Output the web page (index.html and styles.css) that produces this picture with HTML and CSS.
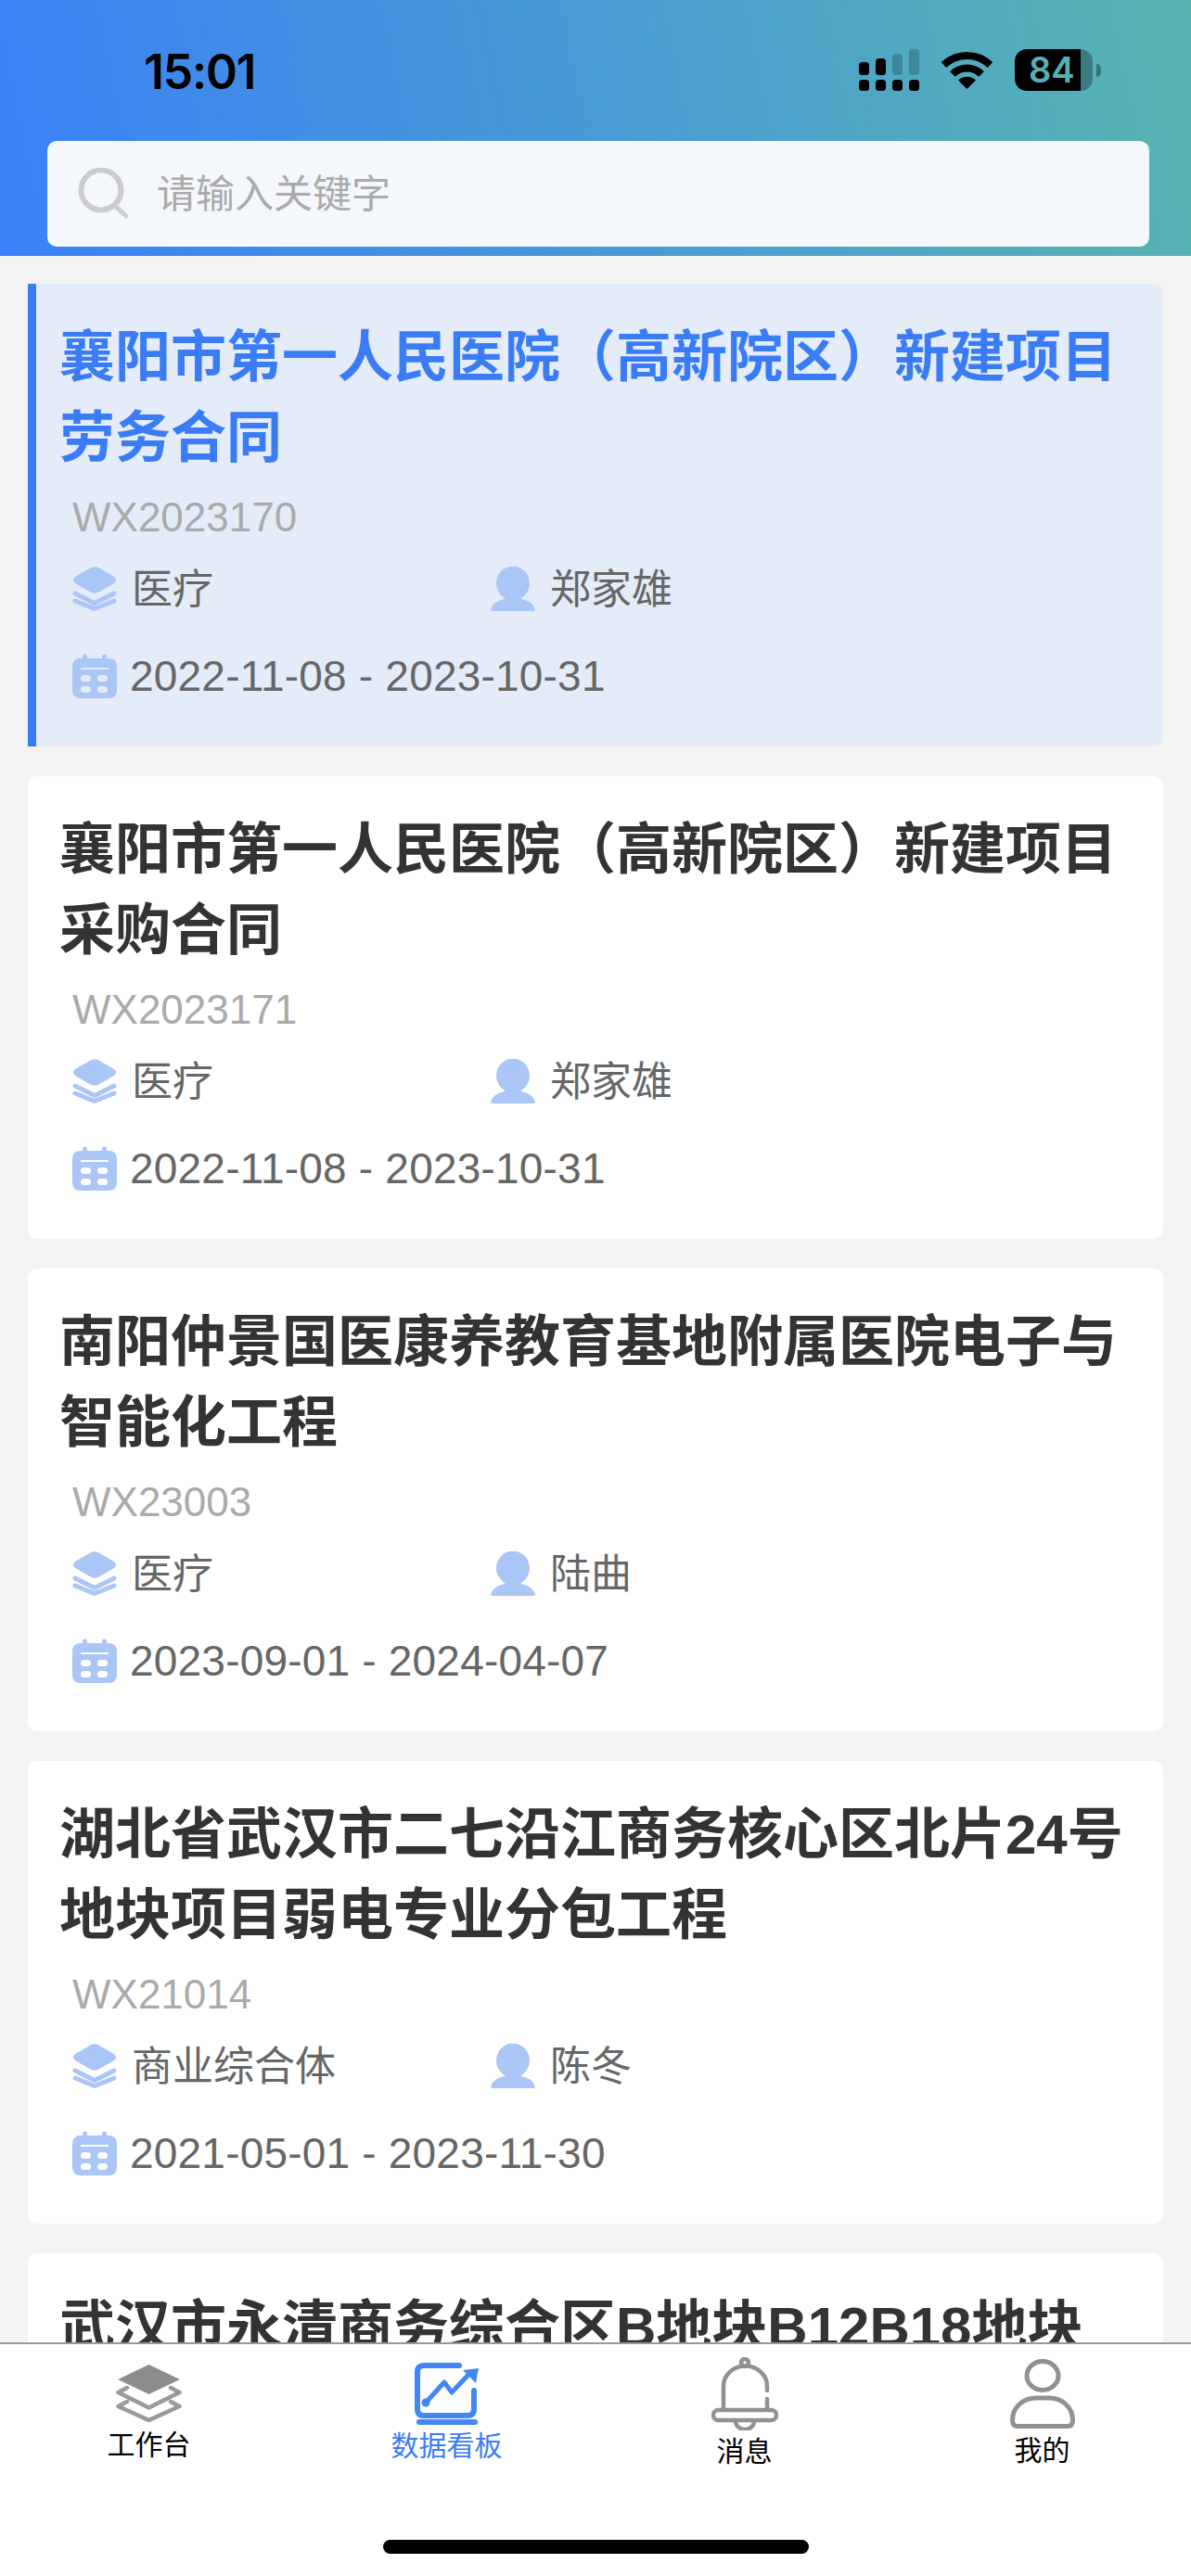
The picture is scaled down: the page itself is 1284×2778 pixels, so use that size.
FILE: index.html
```html
<!DOCTYPE html>
<html lang="zh-CN">
<head>
<meta charset="utf-8">
<title>数据看板</title>
<link rel="stylesheet" href="styles.css">
</head>
<body>
<svg class="defs" width="0" height="0" aria-hidden="true">
  <symbol id="i-layers" viewBox="0 0 48 48">
    <path class="ic-fill" d="M19.5 1.5 Q24 -1 28.500 1.500 L45 11 Q49 14.500 45 18 L28.500 27.500 Q24 30 19.500 27.500 L3 18 Q-1 14.500 3 11 Z"/>
    <path class="ic-line" d="M3 29 L24 39.500 L45 29 M3 37 L24 45.500 L45 37"/>
  </symbol>
  <symbol id="i-user" viewBox="0 0 48 48">
    <ellipse class="ic-fill" cx="24" cy="18" rx="18" ry="18.500"/>
    <path class="ic-fill" d="M16 30 H32 L33 35 Q46 38 48 46 Q48 48 46 48 H2 Q0 48 0 46 Q2 38 15 35 Z"/>
  </symbol>
  <symbol id="i-cal" viewBox="0 0 48 48">
    <path class="ic-fill" d="M11 5 V3 A2.500 2.500 0 0 1 16 3 V5 H32 V3 A2.500 2.500 0 0 1 37 3 V5 H39 Q48 5 48 14 V39 Q48 48 39 48 H9 Q0 48 0 39 V14 Q0 5 9 5 Z"/>
    <rect class="ic-hole" x="9" y="15" width="30" height="2"/>
    <rect class="ic-hole" x="9" y="23" width="11" height="7" rx="3.500"/>
    <rect class="ic-hole" x="27" y="23" width="11" height="7" rx="3.500"/>
    <rect class="ic-hole" x="9" y="35" width="11" height="7" rx="3.500"/>
    <rect class="ic-hole" x="27" y="35" width="11" height="7" rx="3.500"/>
  </symbol>
</svg>

<header class="header">
  <div class="status">
    <span class="time">15:01</span>
    <div class="status-icons">
      <svg class="sig" viewBox="0 0 65 45">
        <rect class="sig-on" x="0" y="14" width="11" height="14" rx="3.500"/>
        <rect class="sig-on" x="18" y="10" width="11" height="18" rx="3.500"/>
        <rect class="sig-off" x="36" y="5" width="11" height="23" rx="3.500"/>
        <rect class="sig-off" x="54" y="0" width="11" height="28" rx="3.500"/>
        <rect class="sig-on" x="0" y="33" width="11" height="12" rx="3.500"/>
        <rect class="sig-on" x="18" y="33" width="11" height="12" rx="3.500"/>
        <rect class="sig-on" x="36" y="33" width="11" height="12" rx="3.500"/>
        <rect class="sig-on" x="54" y="33" width="11" height="12" rx="3.500"/>
      </svg>
      <svg class="wifi" viewBox="0 0 57 42">
        <path class="wifi-arc" d="M3.500 16 A36 36 0 0 1 53.500 16"/>
        <path class="wifi-arc" d="M13 26 A22 22 0 0 1 44 26"/>
        <path d="M28.500 42 L19 32.500 A14 14 0 0 1 38 32.500 Z"/>
      </svg>
      <div class="battery">
        <span class="battery-body">84</span>
        <span class="battery-nub"></span>
      </div>
    </div>
  </div>
  <div class="search">
    <svg class="search-icon" viewBox="0 0 56 56">
      <ellipse class="search-ring" cx="25" cy="24" rx="21.500" ry="21.500"/>
      <path class="search-tail" d="M41 42 L52 52"/>
    </svg>
    <span class="search-text">请输入关键字</span>
  </div>
</header>

<main class="list">
  <article class="card card-active">
    <h2 class="card-title">襄阳市第一人民医院（高新院区）新建项目劳务合同</h2>
    <div class="card-code">WX2023170</div>
    <div class="card-row">
      <div class="meta meta-type"><svg class="meta-icon"><use href="#i-layers"/></svg><span>医疗</span></div>
      <div class="meta"><svg class="meta-icon"><use href="#i-user"/></svg><span>郑家雄</span></div>
    </div>
    <div class="card-date"><svg class="meta-icon"><use href="#i-cal"/></svg><span>2022-11-08 - 2023-10-31</span></div>
  </article>
  <article class="card">
    <h2 class="card-title">襄阳市第一人民医院（高新院区）新建项目采购合同</h2>
    <div class="card-code">WX2023171</div>
    <div class="card-row">
      <div class="meta meta-type"><svg class="meta-icon"><use href="#i-layers"/></svg><span>医疗</span></div>
      <div class="meta"><svg class="meta-icon"><use href="#i-user"/></svg><span>郑家雄</span></div>
    </div>
    <div class="card-date"><svg class="meta-icon"><use href="#i-cal"/></svg><span>2022-11-08 - 2023-10-31</span></div>
  </article>
  <article class="card">
    <h2 class="card-title">南阳仲景国医康养教育基地附属医院电子与智能化工程</h2>
    <div class="card-code">WX23003</div>
    <div class="card-row">
      <div class="meta meta-type"><svg class="meta-icon"><use href="#i-layers"/></svg><span>医疗</span></div>
      <div class="meta"><svg class="meta-icon"><use href="#i-user"/></svg><span>陆曲</span></div>
    </div>
    <div class="card-date"><svg class="meta-icon"><use href="#i-cal"/></svg><span>2023-09-01 - 2024-04-07</span></div>
  </article>
  <article class="card">
    <h2 class="card-title">湖北省武汉市二七沿江商务核心区北片24号地块项目弱电专业分包工程</h2>
    <div class="card-code">WX21014</div>
    <div class="card-row">
      <div class="meta meta-type"><svg class="meta-icon"><use href="#i-layers"/></svg><span>商业综合体</span></div>
      <div class="meta"><svg class="meta-icon"><use href="#i-user"/></svg><span>陈冬</span></div>
    </div>
    <div class="card-date"><svg class="meta-icon"><use href="#i-cal"/></svg><span>2021-05-01 - 2023-11-30</span></div>
  </article>
  <article class="card">
    <h2 class="card-title">武汉市永清商务综合区B地块B12B18地块</h2>
  </article>
</main>

<nav class="tabbar">
  <div class="tabs">
    <div class="tab tab-work">
      <svg class="tab-svg" width="71" height="62" viewBox="0 0 71 62">
        <path class="t-solid" d="M35.500 0 L69 16 L35.500 32 L2 16 Z"/>
        <path class="t-chev" d="M12 25 L2.500 30 L35.500 46.500 L68.500 30 L59 25 M12 40 L2.500 45 L35.500 60 L68.500 45 L59 40"/>
      </svg>
      <span class="tab-label">工作台</span>
    </div>
    <div class="tab tab-data tab-on">
      <svg class="tab-svg" width="70" height="67" viewBox="0 0 70 67">
        <path class="d-line" d="M48 3 H10 Q3 3 3 10 V50 Q3 57 10 57 H57 Q64 57 64 50 V30"/>
        <path class="d-line" d="M5 64 H65"/>
        <path class="d-thin" d="M12 43 L32 21 L40 32 L58 13"/>
        <circle class="d-solid" cx="12" cy="43" r="4.500"/>
        <path class="d-solid" d="M69 6 L52 8 L66 22 Z"/>
      </svg>
      <span class="tab-label">数据看板</span>
    </div>
    <div class="tab tab-msg">
      <svg class="tab-svg" width="72" height="79" viewBox="0 0 72 79">
        <circle class="t-line" cx="36" cy="6" r="4"/>
        <path class="t-line" d="M13 56 V31 A23 21 0 0 1 60 31 V36 M60 45 V56"/>
        <rect class="t-line" x="2" y="57" width="68" height="11" rx="5.500"/>
        <path class="t-line" d="M26 69 A10 9 0 0 0 46 69"/>
      </svg>
      <span class="tab-label">消息</span>
    </div>
    <div class="tab tab-me">
      <svg class="tab-svg" width="70" height="75" viewBox="0 0 70 75">
        <ellipse class="t-line t-wide" cx="35" cy="18" rx="17" ry="15.500"/>
        <path class="t-line t-wide" d="M2.500 66 C2.500 52 14 42 28 42 H42 C56 42 67.500 52 67.500 66 Q67.500 72.500 62 72.500 H8 Q2.500 72.500 2.500 66 Z"/>
      </svg>
      <span class="tab-label">我的</span>
    </div>
  </div>
  <div class="home-bar"></div>
</nav>
</body>
</html>
```

FILE: styles.css
```css
* { box-sizing: border-box; }

html, body { margin: 0; padding: 0; }

body {
  width: 1284px;
  height: 2778px;
  display: flex;
  flex-direction: column;
  overflow: hidden;
  background: #f3f3f3;
  font-family: "Liberation Sans", "Noto Sans CJK SC", sans-serif;
}

.defs { display: block; height: 0; }

.ic-fill { fill: #a9c6f6; }
.ic-line { fill: none; stroke: #a9c6f6; stroke-width: 5; stroke-linecap: round; stroke-linejoin: round; }
.ic-hole { fill: var(--card-bg); }

/* header */
.header {
  height: 276px;
  flex: none;
  padding: 0 45px 10px 51px;
  display: flex;
  flex-direction: column;
  background: linear-gradient(78deg, #3a80f8 0%, #4698d8 45%, #58b5b0 100%);
}

.status {
  height: 152px;
  flex: none;
  padding: 53px 0 0 104px;
  display: flex;
  justify-content: space-between;
  align-items: flex-start;
}

.time {
  font-family: "Inter", sans-serif;
  font-weight: 600;
  font-size: 52px;
  line-height: 50px;
  letter-spacing: -1.500px;
  color: #000;
}

.status-icons {
  display: flex;
  align-items: flex-start;
  gap: 23px;
  margin-right: 52px;
}

.sig { width: 65px; height: 45px; display: block; }
.sig-on { fill: #000; }
.sig-off { fill: rgba(0, 0, 0, 0.2); }

.wifi { width: 57px; height: 42px; display: block; margin-top: 1px; }
.wifi-arc { fill: none; stroke: #000; stroke-width: 8; }

.battery { display: flex; align-items: center; }

.battery-body {
  width: 84px;
  height: 45px;
  border-radius: 13px;
  background: linear-gradient(to right, #000 71px, rgba(0, 0, 0, 0.3) 71px);
  color: #55b0b8;
  font-family: "Inter", sans-serif;
  font-weight: 600;
  font-size: 38px;
  line-height: 45px;
  padding-left: 15px;
}

.battery-nub {
  width: 5px;
  height: 14px;
  margin-left: 4px;
  border-radius: 0 7px 7px 0;
  background: rgba(0, 0, 0, 0.35);
}

.search {
  height: 114px;
  flex: none;
  padding-left: 33px;
  display: flex;
  align-items: center;
  gap: 32px;
  border-radius: 10px;
  background: #f4f7fc;
}

.search-icon { width: 56px; height: 56px; flex: none; margin-right: -3px; }
.search-ring { fill: none; stroke: #cccccc; stroke-width: 6; }
.search-tail { fill: none; stroke: #cccccc; stroke-width: 5; stroke-linecap: round; }

.search-text { font-size: 42px; color: #aaaaaa; line-height: 60px; padding-top: 2px; }

/* list */
.list {
  flex: 1;
  min-height: 0;
  overflow: hidden;
  padding: 30px 30px 0;
  display: flex;
  flex-direction: column;
  gap: 32px;
}

.card {
  --card-bg: #ffffff;
  flex: none;
  min-height: 499px;
  padding: 36px 20px 0 25px;
  border-left: 9px solid transparent;
  border-radius: 10px;
  background: #ffffff;
}

.card-active {
  --card-bg: #e4ecf9;
  background: #e4ecf9;
  border-left-color: #3a7cf6;
  border-radius: 0 10px 10px 0;
}

.card-title {
  margin: 0;
  font-size: 60px;
  font-weight: 700;
  line-height: 87px;
  color: #333333;
}

.card-active .card-title { color: #3a7cf6; }

.card-code {
  margin: 11px 0 0 14px;
  font-size: 44px;
  line-height: 62px;
  color: #aaaaaa;
}

.card-row {
  margin: 21px 0 0 14px;
  display: flex;
  align-items: center;
  height: 49px;
}

.meta {
  display: flex;
  align-items: center;
  gap: 16px;
  font-size: 44px;
  line-height: 49px;
  color: #666666;
}

.meta span { padding-top: 2px; }

.meta-type { width: 451px; }

.meta-icon { width: 48px; height: 48px; flex: none; display: block; }

.card-date {
  margin: 46px 0 0 14px;
  display: flex;
  align-items: center;
  gap: 14px;
  font-size: 46px;
  letter-spacing: 0.200px;
  line-height: 48px;
  color: #666666;
}

/* tab bar */
.tabbar {
  height: 252px;
  flex: none;
  border-top: 2px solid #999999;
  background: #ffffff;
  display: flex;
  flex-direction: column;
  position: relative;
}

.tabs {
  height: 211px;
  flex: none;
  display: grid;
  grid-template-columns: repeat(4, 1fr);
}

.tab {
  display: flex;
  flex-direction: column;
  align-items: center;
}

.tab-svg { display: block; flex: none; }

.tab-work { padding-top: 22px; gap: 7px; }
.tab-data { padding-top: 20px; gap: 5px; }
.tab-msg { padding-top: 14px; gap: 5px; }
.tab-me { padding-top: 16px; gap: 6px; }

.tab-label { font-size: 30px; line-height: 36px; color: #000000; }
.tab-on .tab-label { color: #3a7cf6; }

.t-solid { fill: #8c8c8c; }
.t-chev { fill: none; stroke: #999999; stroke-width: 4.500; stroke-linejoin: round; stroke-linecap: round; }
.t-line { fill: none; stroke: #919191; stroke-width: 4.500; stroke-linecap: round; }
.t-wide { stroke-width: 5; }

.d-line { fill: none; stroke: #4287f5; stroke-width: 6; stroke-linecap: round; }
.d-thin { fill: none; stroke: #4287f5; stroke-width: 5; stroke-linejoin: round; }
.d-solid { fill: #4287f5; }

.home-bar {
  width: 459px;
  height: 15px;
  flex: none;
  margin: 0 auto;
  border-radius: 8px;
  background: #000000;
}
```
